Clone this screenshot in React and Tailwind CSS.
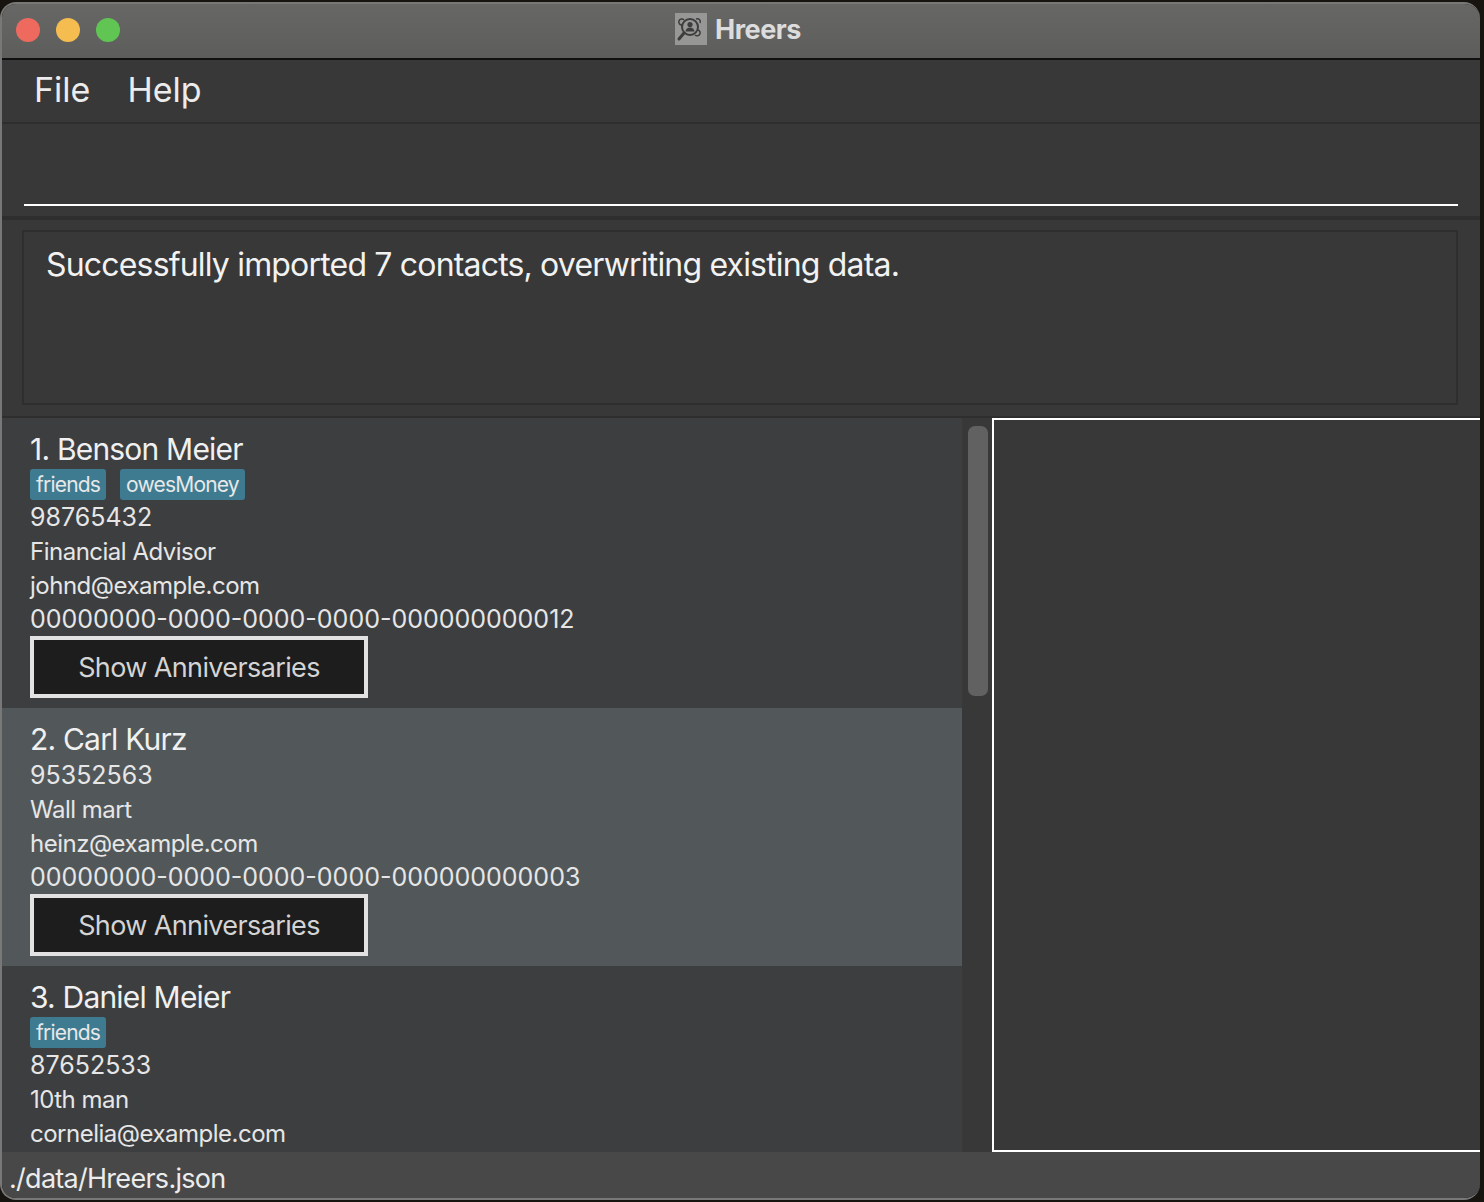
import React from 'react'

const font = { fontFamily: 'Inter' }

// digits run wider in the original font, words run narrower
const numberLine = 'h-[34px] text-[25px] leading-[34px] tracking-[0px] text-[#e6e6e6]'
const textLine = 'h-[34px] text-[24px] leading-[36px] tracking-[-0.5px] text-[#e6e6e6]'

const contacts = [
  {
    name: '1. Benson Meier',
    tags: ['friends', 'owesMoney'],
    lines: [
      ['98765432', numberLine],
      ['Financial Advisor', textLine],
      ['johnd@example.com', textLine],
      ['00000000-0000-0000-0000-000000000012', numberLine],
    ],
    button: true,
  },
  {
    name: '2. Carl Kurz',
    tags: [],
    lines: [
      ['95352563', numberLine],
      ['Wall mart', textLine],
      ['heinz@example.com', textLine],
      ['00000000-0000-0000-0000-000000000003', numberLine],
    ],
    button: true,
    selected: true,
  },
  {
    name: '3. Daniel Meier',
    tags: ['friends'],
    lines: [
      ['87652533', numberLine],
      ['10th man', textLine],
      ['cornelia@example.com', textLine],
    ],
  },
]

const AppIcon = () => (
  <svg width="32" height="32" viewBox="0 0 32 32" className="shrink-0 mb-[2px]">
    <rect width="32" height="32" fill="#979795" />
    <g fill="none" stroke="#3d3d3d">
      <circle cx="15" cy="14" r="8" strokeWidth="2" />
      <path d="M9 20 L4 26" strokeWidth="3" strokeLinecap="round" />
      <path d="M9 7 a3 3 0 1 0 -2 5" strokeWidth="1.5" />
      <path d="M21 6 a3 3 0 0 1 4 4" strokeWidth="1.5" />
      <path d="M23 17 a3 3 0 1 1 -3 5" strokeWidth="1.5" />
    </g>
    <circle cx="15" cy="11.5" r="2.6" fill="#3d3d3d" />
    <path d="M10.5 18.5 a4.5 4 0 0 1 9 0 Z" fill="#3d3d3d" />
  </svg>
)

const ContactCard = ({ contact }) => (
  <div className={`pl-[28px] pt-[13px] ${contact.selected ? 'bg-[#52585a]' : 'bg-[#3d3e40]'} ${contact.button ? 'pb-[10px]' : 'pb-[20px]'}`}>
    <div className="h-[37px] text-[30px] leading-[37px] tracking-[-0.8px] text-[#f0f0f0]">{contact.name}</div>
    {contact.tags.length > 0 && (
      <div className="flex gap-[14px] h-[32px] pt-[1px]">
        {contact.tags.map(tag => (
          <span key={tag} className="h-[31px] px-[6px] rounded-[3px] bg-[#3e7b91] text-[21px] leading-[31px] tracking-[-0.8px] text-[#e8e8e8]">
            {tag}
          </span>
        ))}
      </div>
    )}
    {contact.lines.map(([text, style]) => (
      <div key={text} className={style}>{text}</div>
    ))}
    {contact.button && (
      <div className="w-[338px] h-[62px] pt-[2px] border-[4px] border-[#e2e2e2] bg-[#1d1d1d] text-[27px] leading-[52px] tracking-[-0.62px] text-center text-[#d4d4d4]">
        Show Anniversaries
      </div>
    )}
  </div>
)

export default function App() {
  return (
    <div className="w-[1484px] h-[1202px] bg-[#17130f] pt-[2px] pr-[4px] pb-[2px] pl-[0px] overflow-hidden" style={font}>
      <div className="h-full flex flex-col rounded-[16px] overflow-hidden border-l-[2px] border-t-[2px] border-b-[2px] border-[#787878]">
        {/* Title bar */}
        <div className="relative h-[56px] shrink-0 flex items-center justify-center pb-[2px] bg-gradient-to-b from-[#676765] to-[#5d5d5b] border-b-[2px] border-[#111111]">
          <div className="absolute left-[14px] top-[14px] flex gap-[16px]">
            <span className="w-[24px] h-[24px] rounded-full bg-[#ee6a5f]" />
            <span className="w-[24px] h-[24px] rounded-full bg-[#f5bd4f]" />
            <span className="w-[24px] h-[24px] rounded-full bg-[#61c554]" />
          </div>
          <div className="flex items-center gap-[8px] ml-[-6px]">
            <AppIcon />
            <span className="text-[27px] font-bold text-[#dcdcdc] tracking-[-0.45px]">Hreers</span>
          </div>
        </div>

        {/* Menu */}
        <div className="h-[64px] shrink-0 flex items-center gap-[37px] pl-[32px] pb-[3px] bg-[#383838] border-b-[2px] border-[#2e2e2e] text-[34px] tracking-[0px] text-[#ececec]">
          <span>File</span>
          <span>Help</span>
        </div>

        {/* Command box */}
        <div className="h-[92px] shrink-0 bg-[#383838] pl-[22px] pr-[22px] pt-[80px]">
          <div className="h-[2px] bg-white" />
        </div>

        {/* Result display */}
        <div className="h-[202px] shrink-0 bg-[#383838] border-t-[4px] border-b-[2px] border-[#2e2e2e] pl-[20px] pr-[22px] pt-[10px]">
          <div className="h-[175px] border-[2px] border-[#2e2e2e] pl-[22px] pt-[11px] text-[32px] leading-[44px] tracking-[-0.82px] text-[#f2f2f2]">
            Successfully imported 7 contacts, overwriting existing data.
          </div>
        </div>

        {/* List and detail */}
        <div className="h-[734px] shrink-0 flex bg-[#383838]">
          <div className="w-[960px] h-full overflow-hidden bg-[#3d3e40]">
            {contacts.map(contact => (
              <ContactCard key={contact.name} contact={contact} />
            ))}
          </div>
          <div className="w-[30px] pl-[6px] pt-[8px]">
            <div className="w-[20px] h-[270px] rounded-[7px] bg-[#616161]" />
          </div>
          <div className="flex-1 border-[2px] border-white border-r-0 bg-[#383838]" />
        </div>

        {/* Status bar */}
        <div className="flex-1 flex items-center pl-[7px] pt-[7px] bg-[#484848] text-[27px] tracking-[-0.72px] text-[#ececec]">
          ./data/Hreers.json
        </div>
      </div>
    </div>
  )
}
